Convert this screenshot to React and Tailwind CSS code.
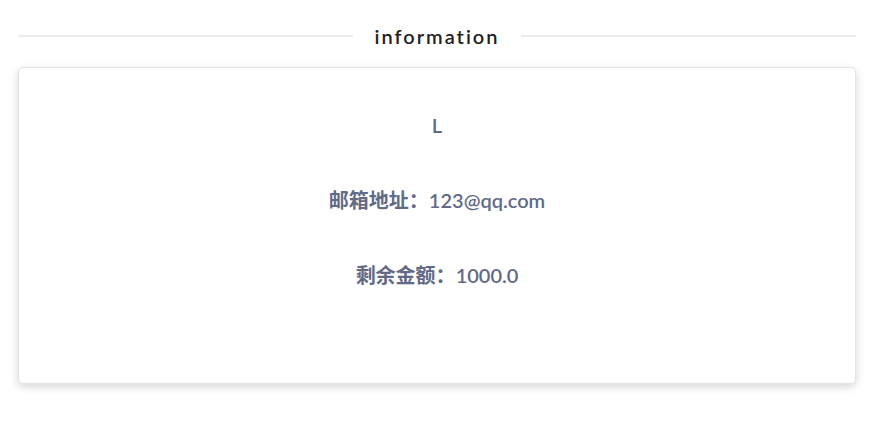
import React from 'react';

const rows = [
  { label: '', value: 'L' },
  { label: '邮箱地址：', value: '123@qq.com' },
  { label: '剩余金额：', value: '1000.0' },
];

const App = () => {
  return (
    <div
      className="min-h-screen bg-white px-[18px] pt-[21px]"
      style={{ fontFamily: 'Lato, "Noto Sans CJK SC", sans-serif' }}
    >
      <div className="flex items-center h-[30px]">
        <div className="flex-1 h-[2px] bg-[#ececec]"></div>
        <h2 className="px-[21px] text-[20px] font-semibold tracking-[2px] text-[#222] leading-none">
          information
        </h2>
        <div className="flex-1 h-[2px] bg-[#ececec]"></div>
      </div>

      <div className="mt-[16px] h-[317px] rounded-[5px] border border-[#e4e4e4] bg-white shadow-[0_3px_8px_rgba(0,0,0,0.16)] pt-[19px]">
        {rows.map((row, i) => (
          <div
            key={i}
            className="h-[75px] flex items-center justify-center text-[20px] font-semibold text-[#626a86]"
          >
            {row.label && <span>{row.label}</span>}
            <span>{row.value}</span>
          </div>
        ))}
      </div>
    </div>
  );
};

export default App;
